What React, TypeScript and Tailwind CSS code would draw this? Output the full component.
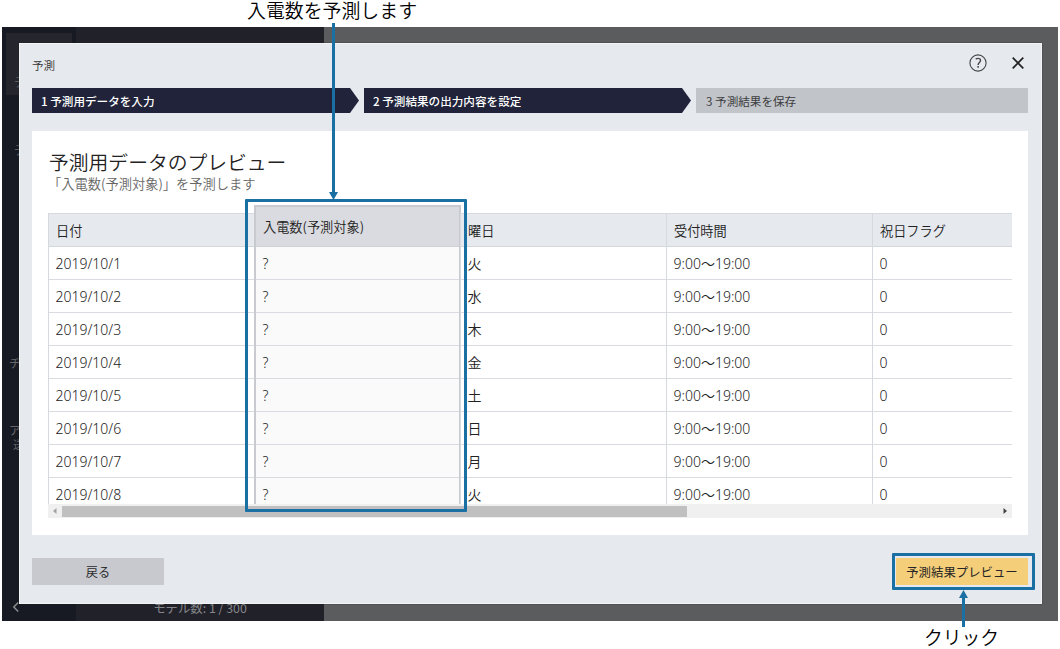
import React from 'react';

const days = ['火', '水', '木', '金', '土', '日', '月', '火'];

function Backdrop() {
  return (
    <div className="absolute left-[2px] top-[27px] flex h-[594px] w-[1056px] overflow-hidden bg-[#5b5c5e] text-[#85868a]">
      <div className="relative w-[74px] shrink-0 bg-[#171a22]">
        <div className="ml-1 h-[68px] pt-[6px]">
          <div className="h-[62px] w-[66px] bg-[#25252d]" />
        </div>
        <span className="absolute left-[12px] top-[47px] text-[12px] leading-[16px] text-[#5c5c60]">デ</span>
        <span className="absolute left-[12px] top-[115px] text-[12px] leading-[16px] text-[#5c5c60]">デ</span>
        <span className="absolute left-[7px] top-[328px] text-[12px] leading-[16px] text-[#65666a]">チ</span>
        <span className="absolute left-[7px] top-[395px] text-[12px] leading-[16px] text-[#65666a]">ア</span>
        <span className="absolute left-[11px] top-[409px] text-[11px] leading-[16px] text-[#65666a]">送</span>
        <svg className="absolute left-[10px] top-[574px]" width="8" height="12" viewBox="0 0 8 12" fill="none" stroke="#8c8d90" strokeWidth="1.5">
          <path d="M6.2 1.5 1.8 6l4.4 4.5" />
        </svg>
      </div>
      <div className="flex w-[248px] shrink-0 items-end justify-center bg-[#212129] pb-[5px]">
        <span className="text-[12.4px] leading-[16px]">モデル数: 1 / 300</span>
      </div>
    </div>
  );
}

function Step({ label, width, active }: { label: string; width: string; active?: boolean }) {
  return (
    <div
      className={`flex h-[25px] items-center pt-[3px] text-[11.6px] leading-none ${width} ${
        active
          ? 'bg-[#20233a] pl-[9px] font-medium text-white [clip-path:polygon(0_0,calc(100%_-_9px)_0,100%_50%,calc(100%_-_9px)_100%,0_100%)]'
          : 'bg-[#c1c4c9] pl-[10px] text-[#3c3d40]'
      }`}
    >
      {label}
    </div>
  );
}

function Cell({ children, header }: { children: React.ReactNode; header?: boolean }) {
  return (
    <div
      className={`flex shrink-0 items-center whitespace-nowrap border-b ${
        header
          ? 'h-[33px] border-[#d3d6db] pl-[7px] pt-px text-[13.2px] font-[350]'
          : "h-[33px] border-[#d9dbe0] pl-[6.5px] font-['Noto_Sans','Noto_Sans_CJK_JP',sans-serif] text-[14px] font-[350]"
      }`}
    >
      {children}
    </div>
  );
}

function Column({ title, values }: { title: string; values: string[] }) {
  return (
    <div className="mt-[8px] w-[206px] shrink-0 border-l border-[#d6d9df]">
      <div className="border-t border-[#d6d9df] bg-[#e6e9ee]">
        <Cell header>{title}</Cell>
      </div>
      {values.map((v, i) => (
        <Cell key={i}>{v}</Cell>
      ))}
    </div>
  );
}

function TargetColumn() {
  return (
    <div className="w-[207px] shrink-0 border-l-2 border-r-2 border-t-2 border-[#c8cad0] bg-[#fafafa]">
      <div className="flex h-[40px] items-center border-b border-[#cfd1d6] bg-[#dadbe0] pl-[7px] pt-px text-[13.2px] font-[350]">
        入電数(予測対象)
      </div>
      {days.map((_, i) => (
        <Cell key={i}>?</Cell>
      ))}
    </div>
  );
}

function Scrollbar() {
  return (
    <div className="flex h-[14px] items-center bg-[#f0f0f0]">
      <svg width="14" height="14" viewBox="0 0 14 14" fill="#a3a3a3">
        <path d="M8.5 4v6L5 7z" />
      </svg>
      <div className="h-[11px] w-[625px] bg-[#c0c0c0]" />
      <svg className="ml-auto" width="14" height="14" viewBox="0 0 14 14" fill="#444">
        <path d="M5.5 4v6L9 7z" />
      </svg>
    </div>
  );
}

function Dialog() {
  return (
    <div className="absolute left-[19px] top-[43px] flex h-[561px] w-[1023px] flex-col border border-[#f3f4f6] bg-[#e6e9ee] px-[12px] shadow-[0_0_1px_#222]">
      <header className="flex h-[44px] items-center justify-between">
        <span className="pb-px text-[11.6px] font-[350] text-[#333]">予測</span>
        <div className="flex items-center gap-[23px] pb-[6px] pr-[3px]">
          <svg width="18" height="18" viewBox="0 0 18 18" fill="none" stroke="#444" strokeWidth="1.1">
            <circle cx="9" cy="9" r="8.1" />
            <path d="M6.7 5.1Q7.7 4.4 9 4.4c1.5 0 2.5.8 2.5 2.1C11.5 8.4 9.1 8.6 9.1 10.9" strokeWidth="1.4" />
            <path d="M9.1 12.1v1.6" strokeWidth="1.5" />
          </svg>
          <svg width="16" height="16" viewBox="0 0 16 16" stroke="#222" strokeWidth="1.7">
            <path d="m2.7 2.7 10.6 10.6M13.3 2.7 2.7 13.3" />
          </svg>
        </div>
      </header>
      <div className="flex gap-[5px]">
        <Step active width="w-[327px]" label="1 予測用データを入力" />
        <Step active width="w-[327px]" label="2 予測結果の出力内容を設定" />
        <Step width="w-[332px]" label="3 予測結果を保存" />
      </div>
      <main className="mt-[18px] h-[404px] w-[996px] bg-white px-[16px] pt-[18px]">
        <h1 className="pl-px text-[19.8px] font-[350] leading-[26px] text-[#222]">予測用データのプレビュー</h1>
        <p className="text-[13.25px] font-[350] leading-[18px] text-[#666]">「入電数(予測対象)」を予測します</p>
        <div className="mt-[12px] h-[299px] w-[964px] overflow-hidden">
          <div className="flex w-[1031px] text-[#222]">
            <Column title="日付" values={days.map((_, i) => `2019/10/${i + 1}`)} />
            <TargetColumn />
            <div className="-ml-px flex">
              <Column title="曜日" values={days} />
              <Column title="受付時間" values={days.map(() => '9:00～19:00')} />
              <Column title="祝日フラグ" values={days.map(() => '0')} />
            </div>
          </div>
        </div>
        <Scrollbar />
      </main>
      <footer className="mt-[23px] flex w-[996px] justify-between">
        <button className="h-[27px] w-[132px] rounded-[1px] bg-[#c7c9ce] pt-[2px] text-[12.2px] leading-none text-[#2c2c2e]">戻る</button>
        <button className="h-[27px] w-[132px] bg-[#f4ce78] pt-[2px] text-[12.4px] leading-none text-[#252525]">予測結果プレビュー</button>
      </footer>
    </div>
  );
}

function Annotations() {
  return (
    <>
      <span className="absolute left-[247px] top-[-1px] whitespace-nowrap text-[18.9px] font-[350] leading-[22px] text-black">入電数を予測します</span>
      <svg className="absolute left-[328px] top-[23px]" width="11" height="178" viewBox="0 0 11 178" fill="#1a70a3">
        <path d="M4 0h3v169h3L5.5 177 1 169h3z" />
      </svg>
      <div className="absolute left-[245px] top-[199px] h-[313px] w-[222px] rounded-[1px] border-[3px] border-[#1a70a3]" />
      <div className="absolute left-[892px] top-[553px] h-[37px] w-[143px] rounded-[1px] border-[3px] border-[#1a70a3]" />
      <svg className="absolute left-[958px] top-[589px]" width="11" height="38" viewBox="0 0 11 38" fill="#1a70a3">
        <path d="M4 38h3V9h3L5.5 1 1 9h3z" />
      </svg>
      <span className="absolute left-[924px] top-[626px] whitespace-nowrap text-[18.8px] font-[350] leading-[22px] text-black">クリック</span>
    </>
  );
}

export default function App() {
  return (
    <div className="relative h-[649px] w-[1060px] overflow-hidden bg-white font-['Noto_Sans_CJK_JP',sans-serif]">
      <Backdrop />
      <Dialog />
      <Annotations />
    </div>
  );
}
